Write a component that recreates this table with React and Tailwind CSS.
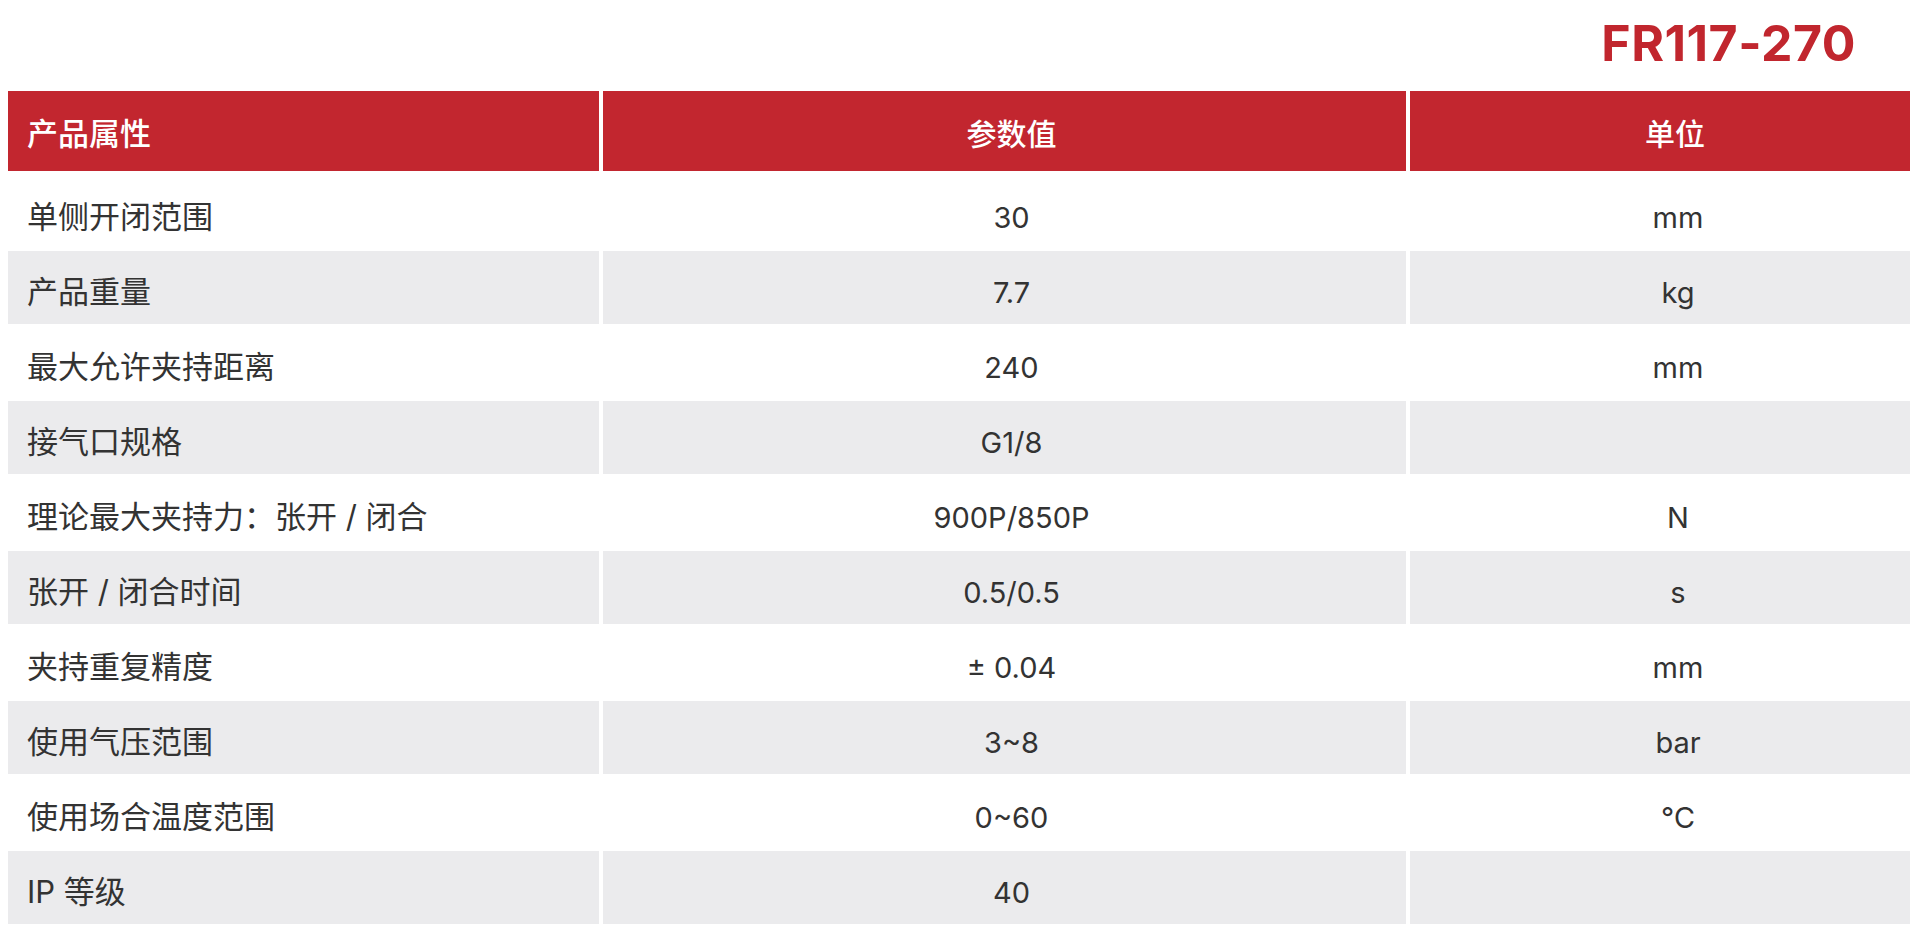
import React from "react";

const rows = [
  ["单侧开闭范围", "30", "mm"],
  ["产品重量", "7.7", "kg"],
  ["最大允许夹持距离", "240", "mm"],
  ["接气口规格", "G1/8", ""],
  ["理论最大夹持力：张开 / 闭合", "900P/850P", "N"],
  ["张开 / 闭合时间", "0.5/0.5", "s"],
  ["夹持重复精度", "± 0.04", "mm"],
  ["使用气压范围", "3~8", "bar"],
  ["使用场合温度范围", "0~60", "℃"],
  ["IP 等级", "40", ""],
];

const font = {
  fontFamily: '"Inter", "Noto Sans CJK SC", "Noto Sans", sans-serif',
};

export default function App() {
  return (
    <div className="w-[1920px] h-[934px] bg-white overflow-hidden" style={font}>
      <div className="flex justify-end pr-[64px] pt-[18px] h-[91px]">
        <div className="text-[50px] leading-[50px] font-bold text-[#c1262e] tracking-[0.5px]">
          FR117-270
        </div>
      </div>
      <div className="ml-[8px] w-[1902px] flex flex-col">
        <div className="grid grid-cols-[591px_803px_500px] gap-x-[4px] h-[80px] bg-white">
          <div className="bg-[#c2262f] text-white text-[31px] font-medium flex items-center pl-[19px] pt-[7px]">
            产品属性
          </div>
          <div className="bg-[#c2262f] text-white text-[30px] font-medium flex items-center justify-center pl-[14px] pt-[7px]">
            参数值
          </div>
          <div className="bg-[#c2262f] text-white text-[30px] font-medium flex items-center justify-center pl-[30px] pt-[7px]">
            单位
          </div>
        </div>
        <div className="flex flex-col gap-y-[2px] mt-[5px]">
          {rows.map((r, i) => {
            const bg = i % 2 === 1 ? "bg-[#ebebed]" : "bg-white";
            return (
              <div key={i} className="grid grid-cols-[591px_803px_500px] gap-x-[4px] h-[73px]">
                <div className={`${bg} text-[#333333] text-[31px] flex items-center pl-[19px] pt-[10px]`}>
                  {r[0]}
                </div>
                <div className={`${bg} text-[#333333] text-[29px] flex items-center justify-center pl-[14px] pt-[10px]`}>
                  {r[1]}
                </div>
                <div className={`${bg} text-[#333333] text-[29px] flex items-center justify-center pl-[36px] pt-[10px]`}>
                  {r[2]}
                </div>
              </div>
            );
          })}
        </div>
      </div>
    </div>
  );
}
